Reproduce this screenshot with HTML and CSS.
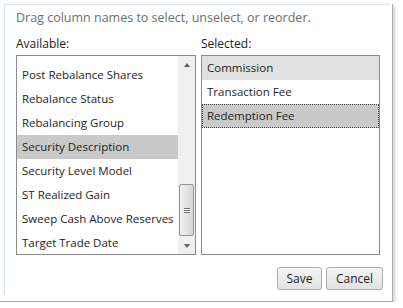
FILE: index.html
```html
<!DOCTYPE html>
<html>
<head>
  <title>Choose Columns</title>
  <link rel="stylesheet" href="styles.css">
</head>
<body>
  <div class="dialog">
    <div class="panel">
      <p class="hint">Drag column names to select, unselect, or reorder.</p>

      <div class="columns">
        <div class="column col-available">
          <label class="caption">Available:</label>
          <div class="listbox">
            <div class="list-view">
              <ul class="items scrolled">
                <li>Post Rebalance Shares</li>
                <li>Rebalance Status</li>
                <li>Rebalancing Group</li>
                <li class="active">Security Description</li>
                <li>Security Level Model</li>
                <li>ST Realized Gain</li>
                <li>Sweep Cash Above Reserves</li>
                <li>Target Trade Date</li>
              </ul>
            </div>
            <div class="scrollbar">
              <div class="arrow up"></div>
              <div class="track">
                <div class="thumb"><span class="grip"></span></div>
              </div>
              <div class="arrow down"></div>
            </div>
          </div>
        </div>

        <div class="column col-selected">
          <label class="caption">Selected:</label>
          <div class="listbox">
            <div class="list-view">
              <ul class="items">
                <li class="hover">Commission</li>
                <li>Transaction Fee</li>
                <li class="active focus">Redemption Fee</li>
              </ul>
            </div>
          </div>
        </div>
      </div>

      <div class="actions">
        <button class="btn btn-save">Save</button>
        <button class="btn btn-cancel">Cancel</button>
      </div>
    </div>
  </div>
</body>
</html>
```

FILE: styles.css
```css
/* Column chooser dialog */
* {
  box-sizing: border-box;
}

body {
  margin: 0;
  background-color: #fff;
  font-family: "Open Sans", "Noto Sans", Arial, sans-serif;
  font-size: 12px;
  color: #1e1e1e;
}

.dialog {
  width: 393px;
  height: 298px;
  border-right: 1px solid #a9a9a9;
  border-bottom: 1px solid #a9a9a9;
  box-shadow: 2px 2px 4px rgba(0, 0, 0, 0.18);
  background-color: #fff;
}

.panel {
  margin: 4px 0 0 4px;
  width: 386px;
  height: 291px;
  padding: 5px 7px 0 11px;
  border-top: 1px solid #dfe7ef;
  border-left: 1px solid #d3e0ec;
}

.hint {
  margin: 0;
  line-height: 16px;
  font-size: 12.5px;
  color: #6e6e6e;
}

.columns {
  display: flex;
  gap: 5px;
  margin: 10px 3px 0 0;
}

.column {
  flex: none;
  min-width: 0;
}

.col-available {
  width: 180px;
}

.col-selected {
  width: 179px;
}

.caption {
  display: block;
  line-height: 16px;
  margin-bottom: 3px;
  color: #222;
}

.listbox {
  display: flex;
  height: 200px;
  border: 1px solid #8c8c8c;
  background-color: #fff;
}

.list-view {
  flex: 1;
  min-width: 0;
  overflow: hidden;
}

.items {
  list-style: none;
  margin: 0;
  padding: 0;
}

/* list is scrolled to the bottom: only a sliver of the row above shows */
.items.scrolled {
  padding-top: 7px;
}

.items li {
  height: 24px;
  line-height: 24px;
  padding-left: 5px;
  font-size: 11.5px;
  white-space: nowrap;
}

.items li.hover {
  background-color: #e1e1e1;
}

.items li.active {
  background-color: #c9c9c9;
}

.items li.focus {
  border: 1px dotted #444;
  line-height: 22px;
  padding-left: 4px;
}

/* scrollbar */
.scrollbar {
  width: 17px;
  flex: none;
  display: flex;
  flex-direction: column;
  background-color: #f0f0f0;
}

.arrow {
  height: 17px;
  display: flex;
  align-items: center;
  justify-content: center;
}

.arrow::before {
  content: "";
  border-left: 3.5px solid transparent;
  border-right: 3.5px solid transparent;
}

.arrow.up::before {
  border-bottom: 4px solid #606060;
}

.arrow.down::before {
  border-top: 4px solid #606060;
}

.track {
  flex: 1;
  display: flex;
  flex-direction: column;
  justify-content: flex-end;
  padding: 0 1px 1px;
}

.thumb {
  height: 52px;
  border: 1px solid #979797;
  border-radius: 2px;
  background: linear-gradient(to right, #f0f0f0, #e4e4e4 50%, #d6d6d6);
  display: flex;
  align-items: center;
  justify-content: center;
}

.grip {
  width: 6px;
  height: 5px;
  border-top: 1px solid #707070;
  border-bottom: 1px solid #707070;
  background: linear-gradient(#fff 0 1px, #707070 1px 2px, #fff 2px);
}

/* buttons */
.actions {
  display: flex;
  justify-content: flex-end;
  gap: 4px;
  margin-top: 12px;
}

.btn {
  height: 23px;
  padding: 0;
  font-family: inherit;
  font-size: 12px;
  color: #1e1e1e;
  border: 1px solid #acacac;
  border-radius: 3px;
  background: linear-gradient(#f4f4f4, #e2e2e2);
}

.btn-save {
  width: 45px;
}

.btn-cancel {
  width: 57px;
}
```
